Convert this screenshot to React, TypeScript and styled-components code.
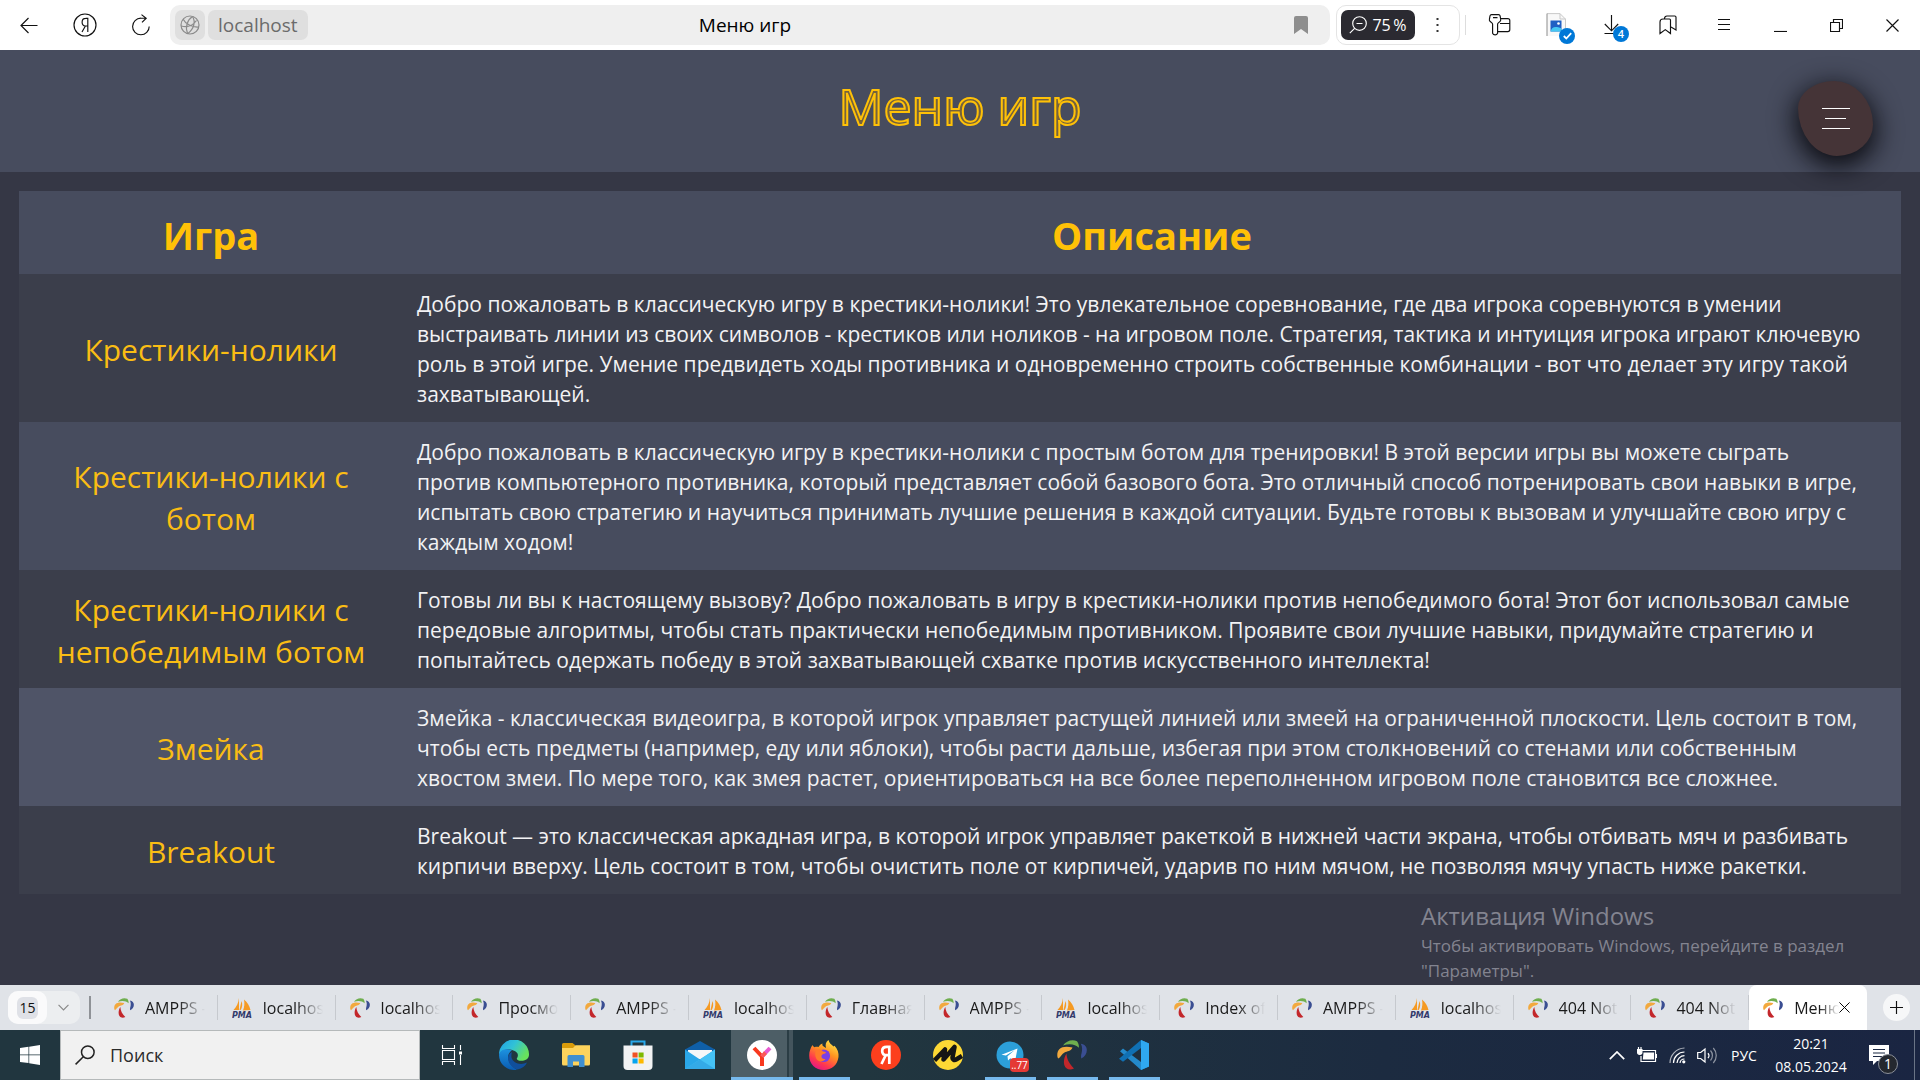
import React from 'react';
import styled, { createGlobalStyle, css } from 'styled-components';

const UI = "'Open Sans', 'Noto Sans', sans-serif";
const GOLD = '#ffc107';

const GlobalStyle = createGlobalStyle`
  *, *::before, *::after { box-sizing: border-box; }
  body { margin: 0; font-family: ${UI}; background: #353745; }
  button, input { font-family: inherit; }
`;

const Desktop = styled.div`
  display: grid;
  grid-template-columns: minmax(0, 1fr);
  grid-template-rows: 50px minmax(0, 1fr) 45px 50px;
  min-height: 100vh;
`;

/* ---------- browser toolbar ---------- */

const Toolbar = styled.header`
  display: flex;
  align-items: center;
  background: #fff;
`;

const PlainButton = styled.button`
  display: flex;
  align-items: center;
  justify-content: center;
  padding: 0;
  border: 0;
  background: none;
  color: #111;
`;

const ToolButton = styled(PlainButton)`
  flex: none;
  width: 56px;
  height: 50px;
`;

const NavGroup = styled.nav`
  display: flex;
  flex: none;
  width: 170px;
  padding-left: 1px;
`;

const AddressBar = styled.div`
  display: grid;
  grid-template-columns: 1fr auto 1fr;
  align-items: center;
  flex: 1;
  height: 40px;
  padding: 0 5px;
  border-radius: 10px;
  background: #efefef;
`;

const AddressSide = styled.div<{ $end?: boolean }>`
  display: flex;
  gap: 3px;
  justify-content: ${(p) => (p.$end ? 'flex-end' : 'flex-start')};
`;

const Chip = styled(PlainButton)<{ $square?: boolean }>`
  height: 30px;
  width: ${(p) => (p.$square ? '30px' : 'auto')};
  padding: ${(p) => (p.$square ? '0' : '0 10px')};
  border-radius: 7px;
  background: #dfdfdf;
  color: #6b6b6b;
  font-size: 19px;
`;

const PageTitle = styled.span`
  padding-right: 10px;
  color: #000;
  font-size: 19px;
`;

const BookmarkButton = styled(PlainButton)`
  width: 48px;
  height: 30px;
`;

const ZoomFrame = styled.div`
  display: flex;
  align-items: center;
  flex: none;
  width: 124px;
  height: 40px;
  margin-left: 6px;
  padding-left: 4px;
  border: 1px solid #e4e4e4;
  border-radius: 10px;
`;

const ZoomBadge = styled(PlainButton)`
  gap: 5px;
  width: 74px;
  height: 30px;
  border-radius: 7px;
  background: #2b2a31;
  color: #fff;
  font-size: 16px;
`;

const DotsButton = styled(PlainButton)`
  flex: 1;
  height: 30px;
`;

const ToolbarDivider = styled.span`
  width: 1px;
  height: 20px;
  margin: 0 6px 0 5px;
  background: #ddd;
`;

const WindowTools = styled.div`
  display: flex;
  flex: none;
`;

const BadgeAnchor = styled.span`
  position: relative;
  display: flex;
`;

const Badge = styled.span`
  position: absolute;
  right: -9px;
  bottom: -7px;
  display: flex;
  align-items: center;
  justify-content: center;
  width: 16px;
  height: 16px;
  border-radius: 50%;
  background: #0078d7;
  color: #fff;
  font-size: 11px;
  font-weight: 600;
  line-height: 16px;
`;

/* ---------- page ---------- */

const Page = styled.main`
  position: relative;
  background: #353745;
`;

const Hero = styled.div`
  display: flex;
  align-items: center;
  justify-content: center;
  height: 122px;
  padding-bottom: 10px;
  background: #474c5e;
`;

const HeroTitle = styled.h1`
  margin: 0;
  color: #75623c;
  font-size: 50px;
  font-weight: 400;
  line-height: 68px;
  -webkit-text-stroke: 2px ${GOLD};
`;

const MenuFab = styled.button`
  position: absolute;
  top: 31px;
  right: 47px;
  display: flex;
  flex-direction: column;
  align-items: center;
  justify-content: center;
  gap: 9px;
  width: 75px;
  height: 75px;
  padding: 0;
  border: 0;
  border-radius: 48% 52% 48% 52% / 36% 58% 42% 64%;
  background: #453437;
  box-shadow: 0 8px 26px 3px rgba(5, 6, 10, 0.9);
`;

const FabLine = styled.span<{ $short?: boolean }>`
  width: ${(p) => (p.$short ? '21px' : '28px')};
  height: 1px;
  background: #fff;
`;

const TableWrap = styled.div`
  padding: 19px;
`;

const GameTable = styled.table`
  width: 100%;
  border-collapse: collapse;
  table-layout: fixed;
`;

const NameCol = styled.col`
  width: 384px;
`;

const HeadCell = styled.th`
  height: 83px;
  padding: 4px 14px 0;
  background: #474c5e;
  color: ${GOLD};
  font-size: 38px;
  font-weight: 700;
`;

type Tone = 'dark' | 'light' | 'hover';
const toneColor: Record<Tone, string> = { dark: '#3b3e4b', light: '#474c5e', hover: '#4f5467' };

const GameRow = styled.tr<{ $tone: Tone }>`
  background: ${(p) => toneColor[p.$tone]};
`;

const NameCell = styled.td`
  padding: 16px 14px 12px;
  text-align: center;
  font-size: 30px;
  line-height: 42px;
`;

const GameLink = styled.a`
  color: #fabd14;
  text-decoration: none;
`;

const TextCell = styled.td`
  padding: 15px 14px 13px;
  color: #f2f2f4;
  font-size: 21px;
  line-height: 30px;
  white-space: pre-line;
`;

const Watermark = styled.aside`
  position: absolute;
  right: 60px;
  bottom: 2px;
  width: 439px;
  color: #838490;
  font-size: 17px;
  line-height: 25px;
`;

const WatermarkTitle = styled.p`
  margin: 0;
  font-size: 24px;
  line-height: 34px;
`;

const WatermarkText = styled.p`
  margin: 0;
`;

/* ---------- browser tab strip ---------- */

const TabStrip = styled.nav`
  display: flex;
  align-items: center;
  background: #e0e3e8;
`;

const TabCounter = styled.div`
  display: flex;
  flex: none;
  width: 72px;
  height: 33px;
  margin-left: 8px;
  border-radius: 10px;
  background: #eceef0;
`;

const CountButton = styled(PlainButton)`
  width: 39px;
  height: 33px;
  border-radius: 10px;
  background: #fafafb;
  font-size: 14px;
`;

const CountShape = styled.span`
  display: flex;
  align-items: center;
  justify-content: center;
  width: 21px;
  height: 22px;
  border-radius: 6px;
  background: #dfe1e7;
`;

const ArrowButton = styled(PlainButton)`
  flex: 1;
`;

const StripDivider = styled.span`
  flex: none;
  width: 2px;
  height: 23px;
  margin: 0 9px;
  background: #8f9297;
`;

const TabList = styled.div`
  display: grid;
  grid-template-columns: repeat(15, minmax(0, 1fr));
  flex: 1;
  align-items: center;
  min-width: 0;
  height: 45px;
`;

const Tab = styled.button<{ $active?: boolean }>`
  display: flex;
  align-items: center;
  min-width: 0;
  height: 25px;
  padding: 0 12px 0 14px;
  border: 0;
  border-right: 1px solid #c6c9ce;
  background: none;
  ${(p) =>
    p.$active &&
    css`
      height: 45px;
      padding-right: 17px;
      border-right: 0;
      border-radius: 8px 8px 0 0;
      background: #fff;
    `}
`;

const TabText = styled.span`
  flex: 1;
  min-width: 0;
  margin-left: 11px;
  overflow: hidden;
  color: #1a1a1a;
  font-size: 16px;
  line-height: 24px;
  text-align: left;
  white-space: nowrap;
  mask-image: linear-gradient(to right, #000 55%, transparent 100%);
`;

const NewTab = styled(PlainButton)`
  flex: none;
  width: 27px;
  height: 27px;
  margin: 0 10px 0 16px;
  border-radius: 50%;
  background: #f6f7f8;
`;

/* ---------- system taskbar ---------- */

const Taskbar = styled.footer`
  display: flex;
  background: linear-gradient(to right, #21363f 0%, #21363f 45%, #1c2b40 72%, #1a2542 100%);
`;

const StartButton = styled(PlainButton)`
  flex: none;
  width: 60px;
`;

const SearchBox = styled.label`
  display: flex;
  align-items: center;
  flex: none;
  gap: 15px;
  width: 360px;
  margin-right: 1px;
  padding-left: 14px;
  border: 1px solid #b5b9ba;
  background: #f1f1f1;
`;

const SearchInput = styled.input`
  flex: 1;
  min-width: 0;
  padding: 0;
  border: 0;
  outline: 0;
  background: none;
  font-size: 18px;
  &::placeholder { color: #2b2b2b; opacity: 1; }
`;

const AppRow = styled.div`
  display: flex;
  flex: 1;
`;

const AppButton = styled(PlainButton)<{ $running?: boolean; $active?: boolean }>`
  position: relative;
  flex: none;
  width: 62px;
  background: ${(p) => (p.$active ? 'linear-gradient(to right, #4d5e66 56px, #2b3d45 56px, #2b3d45 58px, #44555d 58px)' : 'none')};
  &::after {
    content: '';
    position: absolute;
    bottom: 0;
    left: ${(p) => (p.$active ? '0' : '6px')};
    right: ${(p) => (p.$active ? '0' : '5px')};
    height: ${(p) => (p.$running || p.$active ? '3px' : '0')};
    background: #76b9ed;
  }
`;

const UnreadBadge = styled.span`
  position: absolute;
  left: 31px;
  top: 28px;
  width: 19px;
  border-radius: 4px;
  background: #e53935;
  color: #fff;
  font-size: 10px;
  line-height: 14px;
  text-align: center;
`;

const Tray = styled.div`
  display: flex;
  align-items: center;
  flex: none;
  color: #fff;
`;

const TrayButton = styled(PlainButton)<{ $wide?: boolean }>`
  width: ${(p) => (p.$wide ? '44px' : '30px')};
  height: 50px;
  color: #fff;
  font-size: 14px;
`;

const Clock = styled.button`
  width: 90px;
  height: 50px;
  padding: 0;
  border: 0;
  background: none;
  color: #fff;
  font-size: 14px;
  line-height: 23px;
`;

const NoticeButton = styled(PlainButton)`
  position: relative;
  width: 46px;
  height: 50px;
`;

const NoticeCount = styled.span`
  position: absolute;
  left: 22px;
  top: 24px;
  width: 20px;
  height: 20px;
  border: 1px solid #8b9099;
  border-radius: 50%;
  background: #24282f;
  color: #fff;
  font-size: 14px;
  line-height: 18px;
  text-align: center;
`;

const DesktopEdge = styled.span`
  width: 6px;
  height: 50px;
  margin-left: 12px;
  border-left: 1px solid #6a7486;
`;

/* ---------- drawings ---------- */

const line = { fill: 'none', stroke: 'currentColor', strokeWidth: 1.15 } as const;

const BackIcon = () => (
  <svg width="18" height="18" viewBox="0 0 18 18" {...line}><path d="M17.500 9.500H1M8.500 2L1 9.500 8.500 17" /></svg>
);
const YandexOutline = () => (
  <svg width="24" height="24" viewBox="0 0 24 24" {...line}>
    <circle cx="12" cy="12" r="11" />
    <path d="M14.800 19V5.300h-2c-2.300 0-3.700 1.500-3.700 3.900 0 2.200 1.200 3.600 3.300 3.800h2.400M12.400 13L9 19M12.600 5.300h2.200" />
  </svg>
);
const ReloadIcon = () => (
  <svg width="20" height="22" viewBox="0 0 20 22" {...line}>
    <path d="M18.200 12.500a8.300 8.300 0 1 1-8.200-8.300h5.200M10.500 .6l4.700 3.600-4.200 4.200" />
  </svg>
);
const GlobeIcon = () => (
  <svg width="20" height="20" viewBox="0 0 20 20" fill="none" stroke="#8b8b8b" strokeWidth="1.200">
    <circle cx="10" cy="10" r="9" />
    <path d="M12.600 1.500C7 5 5 12 7.600 18.700M12.600 1.500c3 5 1.700 12.500-5 17.200M3.200 4.200C5.500 9 12 12.500 18.700 12M1.200 11c5.500 1.500 11.500-.4 15.300-5.500" />
  </svg>
);
const BookmarkIcon = () => (
  <svg width="14" height="18" viewBox="0 0 14 18"><path d="M0 18V2a2 2 0 0 1 2-2h10a2 2 0 0 1 2 2v16l-7-5z" fill="#8e8e8e" /></svg>
);
const ZoomIcon = () => (
  <svg width="18" height="18" viewBox="0 0 18 18" {...line}><circle cx="10.500" cy="7.500" r="6.800" /><path d="M5.600 12.400L.8 17.200M7.500 7.500h6" /></svg>
);
const DotsIcon = () => (
  <svg width="3" height="15" viewBox="0 0 3 15" fill="#333"><rect width="2" height="2" y="0" x=".5" /><rect width="2" height="2" y="6" x=".5" /><rect width="2" height="2" y="12" x=".5" /></svg>
);
const KeyIcon = () => (
  <svg width="24" height="24" viewBox="0 0 24 24" {...line}>
    <path d="M3.500 1.600h7a1.600 1.600 0 0 1 1.600 1.200l.6 3.600a2 2 0 0 1-.6 1.900l-2 1.800a1.500 1.500 0 0 0-.5 1.100v9a2.700 2.700 0 0 1-5 0v-9a1.500 1.500 0 0 0-.5-1.100L2 8.300a2 2 0 0 1-.6-1.900L2 2.800a1.600 1.600 0 0 1 1.500-1.200zM5 4.600h4.500M12.500 5.600h7.300a2 2 0 0 1 2 2v9a2 2 0 0 1-2 2H10M12 10.500h9.500" />
  </svg>
);
const FileIcon = () => (
  <svg width="20" height="24" viewBox="0 0 20 24">
    <path d="M1 .6h13l5.500 5.500V23H1z" fill="#f8f8f8" />
    <path d="M19.500 6.100V16M1 .6h13l5.500 5.500M14 .6V6h5.500" fill="none" stroke="#c9c9c9" />
    <path d="M1 .6V23" stroke="#8c8c8c" />
    <rect x="4.500" y="7.500" width="11" height="11" fill="#1f5fc4" />
    <path d="M4.500 18.500c1-4 4-6 11-3v3z" fill="#45c7f2" /><circle cx="12.500" cy="10.500" r="1.300" fill="#fff" />
  </svg>
);
const CheckIcon = () => (
  <svg width="9" height="8" viewBox="0 0 9 8" fill="none" stroke="#fff" strokeWidth="1.800"><path d="M.8 4l2.500 2.500L8.200 1.200" /></svg>
);
const DownloadIcon = () => (
  <svg width="16" height="20" viewBox="0 0 16 20" {...line}><path d="M7.500 0v15.500M.8 9l6.700 6.800L14.200 9M.5 18.500H15" /></svg>
);
const MarksIcon = () => (
  <svg width="18" height="20" viewBox="0 0 18 20" {...line}>
    <path d="M1 18.500V7a3 3 0 0 1 3-3h6.500a1 1 0 0 1 1 1v13.500L6.300 14.600zM5.500 4V3.500a2.500 2.500 0 0 1 2.500-2.500h7.800a1.200 1.200 0 0 1 1.200 1.200V15l-5-3" />
  </svg>
);
const BurgerIcon = () => (
  <svg width="12" height="12" viewBox="0 0 12 12" {...line}><path d="M0 .5h12M0 5.500h12M0 10.500h12" /></svg>
);
const MinimizeIcon = () => (
  <svg width="13" height="14" viewBox="0 0 13 14" {...line}><path d="M0 13.500h13" /></svg>
);
const RestoreIcon = () => (
  <svg width="13" height="13" viewBox="0 0 13 13" {...line}><path d="M.5 3.500h9v9h-9zM3.500 3.500v-3h9v9h-3" /></svg>
);
const CloseIcon = ({ size = 13 }: { size?: number }) => (
  <svg width={size} height={size} viewBox="0 0 13 13" {...line}><path d="M.5 .5l12 12M12.500 .5l-12 12" /></svg>
);
const ChevronIcon = ({ up = false }: { up?: boolean }) => (
  <svg width={up ? 16 : 11} height={up ? 9 : 7} viewBox="0 0 16 9" fill="none" stroke={up ? '#fff' : '#888'} strokeWidth="1.700">
    <path d={up ? 'M.8 8.200L8 1l7.200 7.200' : 'M.8 .8L8 8l7.200-7.200'} />
  </svg>
);
const PlusIcon = () => (
  <svg width="13" height="13" viewBox="0 0 13 13" {...line}><path d="M6.500 0v13M0 6.500h13" /></svg>
);

const AmppsIcon = ({ size = 20 }: { size?: number }) => (
  <svg width={size} height={size} viewBox="0 0 30 30">
    <path d="M6 5.500C9 1 15 -1 20 1.200c1 1.500 2.300 4 1.800 6.500C18.500 4.500 13 3.200 6 5.500z" fill="#6fae4e" />
    <path d="M.3 15.500C0 8 6 5 15.500 7.500 14 11.500 10 11 7.500 12.500 5 14 3.500 17 1.500 18.500.8 18 .3 17 .3 15.500z" fill="#f2a93e" />
    <path d="M23.800 3.800c4 .5 6 3 6 6.500 0 3.700-2 6.500-5.500 8.200-.3-1.500-.5-3 .3-5.500C25.300 10 25.500 7 23.800 3.800z" fill="#3a4e92" />
    <path d="M9.500 13.500c.3 6 3 10.500 7.500 15-4.500 2.500-8.500.5-9.700-3.500-1-3.800 0-8 2.200-11.500z" fill="#c3272b" />
  </svg>
);
const PmaIcon = () => (
  <svg width="20" height="20" viewBox="0 0 20 20">
    <path d="M7 0v12H1.500C4.500 9 6.500 5 7 0zM12 1.500c3.500 3 5.500 6 6.500 10.500L11 12.500C12.500 9 12.700 5 12 1.500zM9.500 3c1.200 3 .8 6.500-.8 9H7.500z" fill="#f59a23" />
    <text x="10" y="19.500" textAnchor="middle" fontFamily="DejaVu Sans, sans-serif" fontSize="8" fontWeight="700" fontStyle="italic" fill="#333a6b">PMA</text>
  </svg>
);

const WindowsIcon = () => (
  <svg width="20" height="20" viewBox="0 0 20 20" fill="#fff"><path d="M0 3l8.500-1.200v7.800H0zM9.200 1.700L20 0v9.600H9.200zM0 10.300h8.500v7.800L0 17zM9.200 10.300H20V20L9.200 18.300z" /></svg>
);
const SearchIcon = () => (
  <svg width="20" height="20" viewBox="0 0 20 20" fill="none" stroke="#222" strokeWidth="1.500"><circle cx="12.800" cy="7.200" r="6.300" /><path d="M8.300 11.700L.6 19.400" /></svg>
);
const TaskViewIcon = () => (
  <svg width="22" height="20" viewBox="0 0 22 20" fill="none" stroke="#fff" strokeWidth="1.100">
    <path d="M1.500 0v3.500h12V0M1.500 20v-3.500h12V20M1.500 5.500h12v9h-12zM19.500 0v5M19.500 10v10" /><path d="M18 6.500h3v3h-3z" fill="#fff" stroke="none" />
  </svg>
);
const EdgeIcon = () => (
  <svg width="30" height="30" viewBox="0 0 30 30">
    <defs>
      <linearGradient id="edgeTop" x1="0" x2="1" y1="0" y2=".5"><stop offset="0" stopColor="#1f9fe6" /><stop offset=".5" stopColor="#31c2d6" /><stop offset="1" stopColor="#68e25c" /></linearGradient>
      <linearGradient id="edgeLow" x1="0" x2="0" y1="0" y2="1"><stop offset="0" stopColor="#1d92e0" /><stop offset="1" stopColor="#0a5bb0" /></linearGradient>
    </defs>
    <path d="M0 15A15 15 0 0 1 30 14c.3 5-4 6.800-7.500 6.800-3 0-5-1-4.700-2.300 1-1.500 1.500-3 .7-5C16.500 9.500 4 6.500 0 15z" fill="url(#edgeTop)" />
    <path d="M0 15C1.500 8 9 8.500 13 10.500c-3 1.500-4.500 5-3.500 9S14 27.500 18 29.700A15 15 0 0 1 0 15z" fill="url(#edgeLow)" />
    <path d="M13 12c-3 1.500-4.700 4.500-3.700 8.500C10.500 25 14.500 28.500 18.500 29.600 23 28.500 26.500 26 28 22.500c-6 3-14 1-15.500-5-.3-2 0-4 .5-5.500z" fill="#104f9c" />
  </svg>
);
const FolderIcon = () => (
  <svg width="28" height="24" viewBox="0 0 28 24">
    <path d="M0 1.500A1.500 1.500 0 0 1 1.500 0h9L13 2v6H0z" fill="#d99b0a" />
    <path d="M0 5h11l2.500-2.800H28V21a1.500 1.500 0 0 1-1.500 1.500h-25A1.500 1.500 0 0 1 0 21z" fill="#fdd35c" />
    <path d="M5.500 24V13.500A1.500 1.500 0 0 1 7 12h14a1.500 1.500 0 0 1 1.500 1.500V24H17v-5.500h-6V24z" fill="#3f8fd0" />
  </svg>
);
const StoreIcon = () => (
  <svg width="30" height="30" viewBox="0 0 30 30">
    <path d="M8.500 6V1.500h13V6" fill="none" stroke="#28a8ea" strokeWidth="2" />
    <path d="M.5 5.500h29V26a4 4 0 0 1-4 4h-21a4 4 0 0 1-4-4z" fill="#f1f2f3" />
    <path d="M9.500 12.500H14.600v5H9.500z" fill="#f05125" /><path d="M15.600 12.500h5v5h-5z" fill="#7eb900" />
    <path d="M9.500 18.500h5.100v5H9.500z" fill="#05a5ef" /><path d="M15.600 18.500h5v5h-5z" fill="#fdb900" />
  </svg>
);
const MailIcon = () => (
  <svg width="30" height="28" viewBox="0 0 30 28">
    <path d="M0 8.500L15 0l15 8.500V14H0z" fill="#0f5fa8" /><path d="M3 9h24v9H3z" fill="#f5f7f8" />
    <path d="M0 8.500l15 10 15-10V28H0z" fill="#2aa7e8" /><path d="M0 28L30 8.500V28z" fill="#45c2f5" /><path d="M0 28l15-9.500L30 28z" fill="#1f8fd8" opacity=".45" />
  </svg>
);
const YBrowserIcon = () => (
  <svg width="30" height="30" viewBox="0 0 30 30">
    <circle cx="15" cy="15" r="15" fill="#fff" />
    <path d="M7 8l8 8.500V26" fill="none" stroke="#f8391f" strokeWidth="4" /><path d="M15 16.500L23 8" stroke="#e85bd0" strokeWidth="4" /><path d="M15 16.500l3.500-3.800" stroke="#fb5a55" strokeWidth="4" />
  </svg>
);
const FirefoxIcon = () => (
  <svg width="30" height="30" viewBox="0 0 30 30">
    <defs><linearGradient id="fox" x1=".8" y1="0" x2=".25" y2="1"><stop offset="0" stopColor="#ffe94a" /><stop offset=".4" stopColor="#ff9420" /><stop offset=".75" stopColor="#ff3750" /><stop offset="1" stopColor="#e0158a" /></linearGradient></defs>
    <path d="M3.500 5c.5 1 1 1.700 2 2.300 1.300-.6 3-.5 4-.2C11 4.500 12 4 13.500 3.500c-.5 1.500 0 2.500 1.500 3.200L17 8C16 4.500 17 1.500 19.500 0c.5 3 3 4.500 5 6.500l1-.8c3 3.300 4.500 7 4 11.300C28.500 25 22.500 30 15 30 6.500 30 0 24 .2 15.500.2 11.500 1.500 8 3.500 5z" fill="url(#fox)" />
    <circle cx="14.800" cy="15.800" r="6.300" fill="#7b3fe4" /><path d="M7 10c3-1.500 5.500-.5 7 1.500 2 .3 3 .7 3 1.500-1.500 1-4 .8-4.500 3-.3 2 1.500 3.500 4 3-2 3-7 3.500-9 0C5.800 16 6 12.500 7 10z" fill="#ff7a2a" />
  </svg>
);
const YandexIcon = () => (
  <svg width="30" height="30" viewBox="0 0 30 30">
    <circle cx="15" cy="15" r="15" fill="#fc3f1d" />
    <path d="M18.300 24V6.800h-2.500c-3 0-4.600 1.600-4.600 4.100 0 2.800 1.700 4.300 4.600 4.300h2.500M14.800 15L10.500 24" fill="none" stroke="#fff" strokeWidth="2.700" />
  </svg>
);
const MusicIcon = () => (
  <svg width="30" height="30" viewBox="0 0 30 30">
    <circle cx="15" cy="15" r="15" fill="#fdd835" />
    <path d="M1.500 20.500L12 9.500 10.500 19.500 21.500 7 19.500 17.500c-.3 2.500 2 3 4 1.800l5.500-3.300" fill="none" stroke="#151515" strokeWidth="4.500" strokeLinejoin="round" />
  </svg>
);
const TelegramIcon = () => (
  <svg width="28" height="28" viewBox="0 0 28 28"><circle cx="14" cy="14" r="13.500" fill="#2c9fd9" /><path d="M5.500 13.800L21.500 7.500 19 20.500l-4.700-3.300-2.300 2.300-.5-4.200 7-6-8.600 5.200z" fill="#fff" /></svg>
);
const VsCodeIcon = () => (
  <svg width="30" height="30" viewBox="0 0 30 30">
    <path d="M22 0l8 3.500v23L22 30 1 11.300l3-2.700L22 22z" fill="#2489ca" /><path d="M22 0v8L4 21.800 0 18.700 22 0z" fill="#1070b3" /><path d="M22 0l8 3.500v23L22 30z" fill="#2fa8f0" />
  </svg>
);
const BatteryIcon = () => (
  <svg width="20" height="16" viewBox="0 0 20 16" fill="none" stroke="#fff" strokeWidth="1.200">
    <path d="M5 3.500h13.500v11H4V9" /><path d="M6.500 5.500h10.500v7H5.800z" fill="#fff" stroke="none" /><path d="M19.500 7v4M1.500 0v2.500M4 0v2.500" /><path d="M.6 2.500h4.300v3c0 1-.7 1.800-2.100 1.800S.6 6.500.6 5.500z" fill="#fff" />
  </svg>
);
const WifiIcon = () => (
  <svg width="17" height="17" viewBox="0 0 17 17" fill="none" stroke="#fff" strokeWidth="1.200">
    <path d="M1 16A15 15 0 0 1 15.500 1" opacity=".65" /><path d="M4.500 16A11 11 0 0 1 15.500 5M8 16a7.500 7.500 0 0 1 7.500-7.300M11 16a4.500 4.500 0 0 1 4.500-4" /><circle cx="14.800" cy="14.800" r="1.600" fill="#fff" stroke="none" />
  </svg>
);
const SoundIcon = () => (
  <svg width="21" height="17" viewBox="0 0 21 17" fill="none" stroke="#fff" strokeWidth="1.200">
    <path d="M.7 5.500h3L8 2v13l-4.300-3.500h-3z" /><path d="M11 6a4 4 0 0 1 0 5" /><path d="M13.500 3.500a7.500 7.500 0 0 1 0 10M16.300 1a11 11 0 0 1 0 15" opacity=".5" />
  </svg>
);
const NoticeIcon = () => (
  <svg width="20" height="20" viewBox="0 0 20 20"><path d="M0 0h20v16H8l-4 4v-4H0z" fill="#fff" /><path d="M4 4.500h12M4 8h12M4 11.500h12" stroke="#1b2843" strokeWidth="1.200" /></svg>
);

/* ---------- data ---------- */

interface Game { name: string; text: string; tone: Tone; }

const games: Game[] = [
  {
    name: 'Крестики-нолики',
    tone: 'dark',
    text: 'Добро пожаловать в классическую игру в крестики-нолики! Это увлекательное соревнование, где два игрока соревнуются в умении\nвыстраивать линии из своих символов - крестиков или ноликов - на игровом поле. Стратегия, тактика и интуиция игрока играют ключевую\nроль в этой игре. Умение предвидеть ходы противника и одновременно строить собственные комбинации - вот что делает эту игру такой\nзахватывающей.',
  },
  {
    name: 'Крестики-нолики с ботом',
    tone: 'light',
    text: 'Добро пожаловать в классическую игру в крестики-нолики с простым ботом для тренировки! В этой версии игры вы можете сыграть\nпротив компьютерного противника, который представляет собой базового бота. Это отличный способ потренировать свои навыки в игре,\nиспытать свою стратегию и научиться принимать лучшие решения в каждой ситуации. Будьте готовы к вызовам и улучшайте свою игру с\nкаждым ходом!',
  },
  {
    name: 'Крестики-нолики с непобедимым ботом',
    tone: 'dark',
    text: 'Готовы ли вы к настоящему вызову? Добро пожаловать в игру в крестики-нолики против непобедимого бота! Этот бот использовал самые\nпередовые алгоритмы, чтобы стать практически непобедимым противником. Проявите свои лучшие навыки, придумайте стратегию и\nпопытайтесь одержать победу в этой захватывающей схватке против искусственного интеллекта!',
  },
  {
    name: 'Змейка',
    tone: 'hover',
    text: 'Змейка - классическая видеоигра, в которой игрок управляет растущей линией или змеей на ограниченной плоскости. Цель состоит в том,\nчтобы есть предметы (например, еду или яблоки), чтобы расти дальше, избегая при этом столкновений со стенами или собственным\nхвостом змеи. По мере того, как змея растет, ориентироваться на все более переполненном игровом поле становится все сложнее.',
  },
  {
    name: 'Breakout',
    tone: 'dark',
    text: 'Breakout — это классическая аркадная игра, в которой игрок управляет ракеткой в нижней части экрана, чтобы отбивать мяч и разбивать\nкирпичи вверху. Цель состоит в том, чтобы очистить поле от кирпичей, ударив по ним мячом, не позволяя мячу упасть ниже ракетки.',
  },
];

interface TabInfo { title: string; pma?: boolean; active?: boolean; }

const tabs: TabInfo[] = [
  { title: 'AMPPS -' },
  { title: 'localhost', pma: true },
  { title: 'localhost' },
  { title: 'Просмот' },
  { title: 'AMPPS -' },
  { title: 'localhost', pma: true },
  { title: 'Главная' },
  { title: 'AMPPS -' },
  { title: 'localhost', pma: true },
  { title: 'Index of' },
  { title: 'AMPPS -' },
  { title: 'localhost', pma: true },
  { title: '404 Not' },
  { title: '404 Not' },
  { title: 'Меню', active: true },
];

interface AppInfo { label: string; icon: React.ReactNode; running?: boolean; active?: boolean; unread?: string; }

const apps: AppInfo[] = [
  { label: 'Представление задач', icon: <TaskViewIcon /> },
  { label: 'Edge', icon: <EdgeIcon /> },
  { label: 'Проводник', icon: <FolderIcon /> },
  { label: 'Store', icon: <StoreIcon /> },
  { label: 'Почта', icon: <MailIcon /> },
  { label: 'Яндекс Браузер', icon: <YBrowserIcon />, active: true },
  { label: 'Firefox', icon: <FirefoxIcon />, running: true },
  { label: 'Яндекс', icon: <YandexIcon /> },
  { label: 'Музыка', icon: <MusicIcon /> },
  { label: 'Telegram', icon: <TelegramIcon />, running: true, unread: '..77' },
  { label: 'AMPPS', icon: <AmppsIcon size={30} />, running: true },
  { label: 'Visual Studio Code', icon: <VsCodeIcon />, running: true },
];

const BrowserToolbar = () => (
  <Toolbar>
    <NavGroup>
      <ToolButton aria-label="Назад"><BackIcon /></ToolButton>
      <ToolButton aria-label="Яндекс"><YandexOutline /></ToolButton>
      <ToolButton aria-label="Обновить"><ReloadIcon /></ToolButton>
    </NavGroup>
    <AddressBar>
      <AddressSide>
        <Chip $square aria-label="О сайте"><GlobeIcon /></Chip>
        <Chip>localhost</Chip>
      </AddressSide>
      <PageTitle>Меню игр</PageTitle>
      <AddressSide $end>
        <BookmarkButton aria-label="В закладки"><BookmarkIcon /></BookmarkButton>
      </AddressSide>
    </AddressBar>
    <ZoomFrame>
      <ZoomBadge><ZoomIcon />75{'\u2009'}%</ZoomBadge>
      <DotsButton aria-label="Ещё"><DotsIcon /></DotsButton>
    </ZoomFrame>
    <ToolbarDivider />
    <WindowTools>
      <ToolButton aria-label="Пароли"><KeyIcon /></ToolButton>
      <ToolButton aria-label="Файл">
        <BadgeAnchor><FileIcon /><Badge><CheckIcon /></Badge></BadgeAnchor>
      </ToolButton>
      <ToolButton aria-label="Загрузки">
        <BadgeAnchor><DownloadIcon /><Badge>4</Badge></BadgeAnchor>
      </ToolButton>
      <ToolButton aria-label="Закладки"><MarksIcon /></ToolButton>
      <ToolButton aria-label="Меню"><BurgerIcon /></ToolButton>
      <ToolButton aria-label="Свернуть"><MinimizeIcon /></ToolButton>
      <ToolButton aria-label="Восстановить"><RestoreIcon /></ToolButton>
      <ToolButton aria-label="Закрыть"><CloseIcon /></ToolButton>
    </WindowTools>
  </Toolbar>
);

const GamesPage = () => (
  <Page>
    <Hero><HeroTitle>Меню игр</HeroTitle></Hero>
    <TableWrap>
      <GameTable>
        <colgroup><NameCol /><col /></colgroup>
        <thead>
          <tr><HeadCell scope="col">Игра</HeadCell><HeadCell scope="col">Описание</HeadCell></tr>
        </thead>
        <tbody>
          {games.map((g) => (
            <GameRow key={g.name} $tone={g.tone}>
              <NameCell><GameLink href="#">{g.name}</GameLink></NameCell>
              <TextCell>{g.text}</TextCell>
            </GameRow>
          ))}
        </tbody>
      </GameTable>
    </TableWrap>
    <MenuFab aria-label="Меню"><FabLine /><FabLine $short /><FabLine /></MenuFab>
    <Watermark>
      <WatermarkTitle>Активация Windows</WatermarkTitle>
      <WatermarkText>Чтобы активировать Windows, перейдите в раздел<br />"Параметры".</WatermarkText>
    </Watermark>
  </Page>
);

const BrowserTabs = () => (
  <TabStrip>
    <TabCounter>
      <CountButton><CountShape>15</CountShape></CountButton>
      <ArrowButton aria-label="Список вкладок"><ChevronIcon /></ArrowButton>
    </TabCounter>
    <StripDivider />
    <TabList>
      {tabs.map((t, i) => (
        <Tab key={i} $active={t.active}>
          {t.pma ? <PmaIcon /> : <AmppsIcon />}
          <TabText>{t.title}</TabText>
          {t.active && <CloseIcon size={11} />}
        </Tab>
      ))}
    </TabList>
    <NewTab aria-label="Новая вкладка"><PlusIcon /></NewTab>
  </TabStrip>
);

const SystemTaskbar = () => (
  <Taskbar>
    <StartButton aria-label="Пуск"><WindowsIcon /></StartButton>
    <SearchBox><SearchIcon /><SearchInput aria-label="Поиск" placeholder="Поиск" /></SearchBox>
    <AppRow>
      {apps.map((a) => (
        <AppButton key={a.label} aria-label={a.label} $running={a.running} $active={a.active}>
          {a.icon}
          {a.unread && <UnreadBadge>{a.unread}</UnreadBadge>}
        </AppButton>
      ))}
    </AppRow>
    <Tray>
      <TrayButton aria-label="Скрытые значки"><ChevronIcon up /></TrayButton>
      <TrayButton aria-label="Батарея"><BatteryIcon /></TrayButton>
      <TrayButton aria-label="Сеть"><WifiIcon /></TrayButton>
      <TrayButton aria-label="Звук"><SoundIcon /></TrayButton>
      <TrayButton $wide>РУС</TrayButton>
      <Clock>20:21<br />08.05.2024</Clock>
      <NoticeButton aria-label="Уведомления"><NoticeIcon /><NoticeCount>1</NoticeCount></NoticeButton>
      <DesktopEdge />
    </Tray>
  </Taskbar>
);

export default function App() {
  return (
    <>
      <GlobalStyle />
      <Desktop>
        <BrowserToolbar />
        <GamesPage />
        <BrowserTabs />
        <SystemTaskbar />
      </Desktop>
    </>
  );
}
